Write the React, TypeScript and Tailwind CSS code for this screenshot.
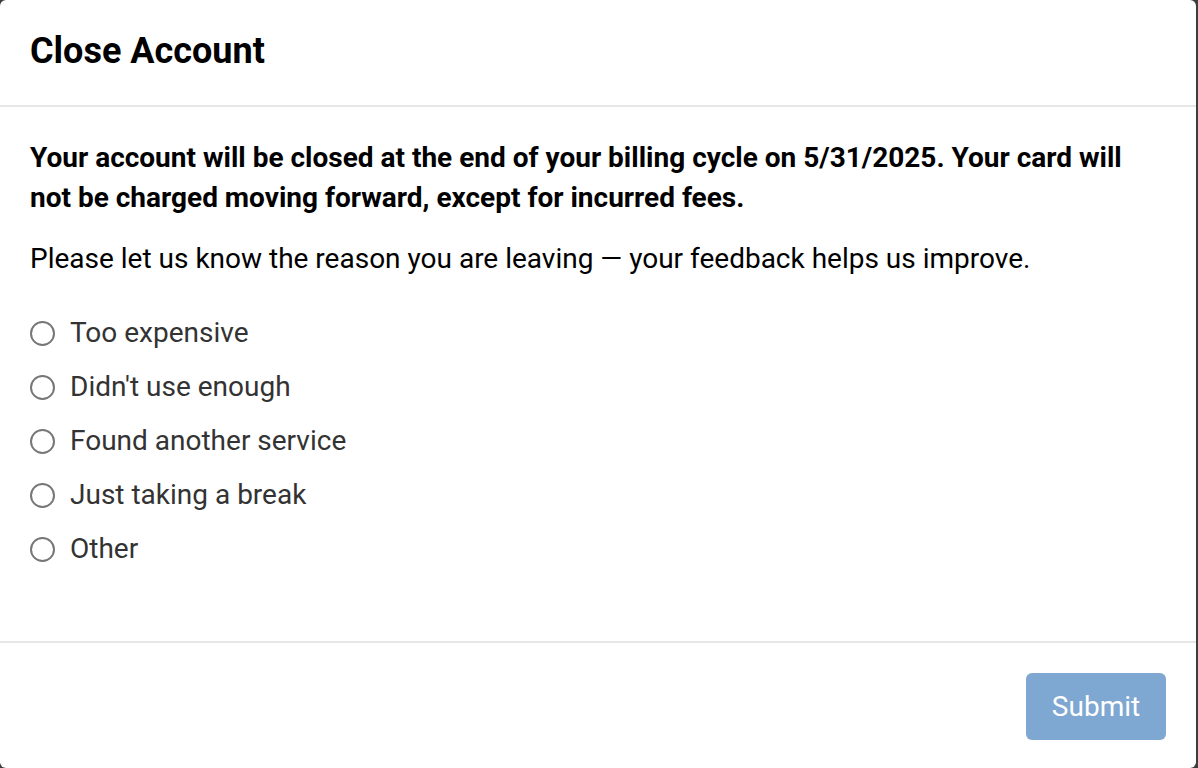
import { useState } from "react";

const REASONS = [
  "Too expensive",
  "Didn't use enough",
  "Found another service",
  "Just taking a break",
  "Other",
];

export default function App() {
  const [reason, setReason] = useState<string | null>(null);

  return (
    <div className="flex h-[768px] w-[1198px] bg-[#3d3d3d] font-['Roboto',sans-serif]">
      <div className="flex h-[768px] w-[1196px] flex-col rounded-[6px] bg-white">
        <header className="border-b-2 border-[#e6e6e6] px-[30px] pb-[31px] pt-[28px]">
          <h1 className="text-[36px] font-bold leading-[46px] text-black">Close Account</h1>
        </header>

        <div className="flex-1 px-[30px] pt-[31px]">
          <p className="text-[28px] font-bold leading-[40px] text-black">
            Your account will be closed at the end of your billing cycle on 5/31/2025. Your card will
            not be charged moving forward, except for incurred fees.
          </p>
          <p className="mt-[21px] text-[28px] leading-[40px] text-black">
            Please let us know the reason you are leaving — your feedback helps us improve.
          </p>

          <div className="mt-[34px] flex flex-col gap-[14px]">
            {REASONS.map((r) => (
              <label key={r} className="flex cursor-pointer items-center gap-[15px]">
                <span
                  onClick={() => setReason(r)}
                  className="grid h-[25px] w-[25px] place-items-center rounded-full border-2 border-[#777777] bg-white"
                >
                  {reason === r && <span className="h-[13px] w-[13px] rounded-full bg-[#0b63ce]" />}
                </span>
                <span className="text-[28px] leading-[40px] text-[#333333]">{r}</span>
              </label>
            ))}
          </div>
        </div>

        <footer className="flex justify-end border-t-2 border-[#e6e6e6] px-[30px] pb-[28px] pt-[30px]">
          <button
            disabled={!reason}
            className="h-[67px] w-[140px] rounded-[6px] bg-[#7ea7d2] text-[28px] text-white"
          >
            Submit
          </button>
        </footer>
      </div>
    </div>
  );
}
